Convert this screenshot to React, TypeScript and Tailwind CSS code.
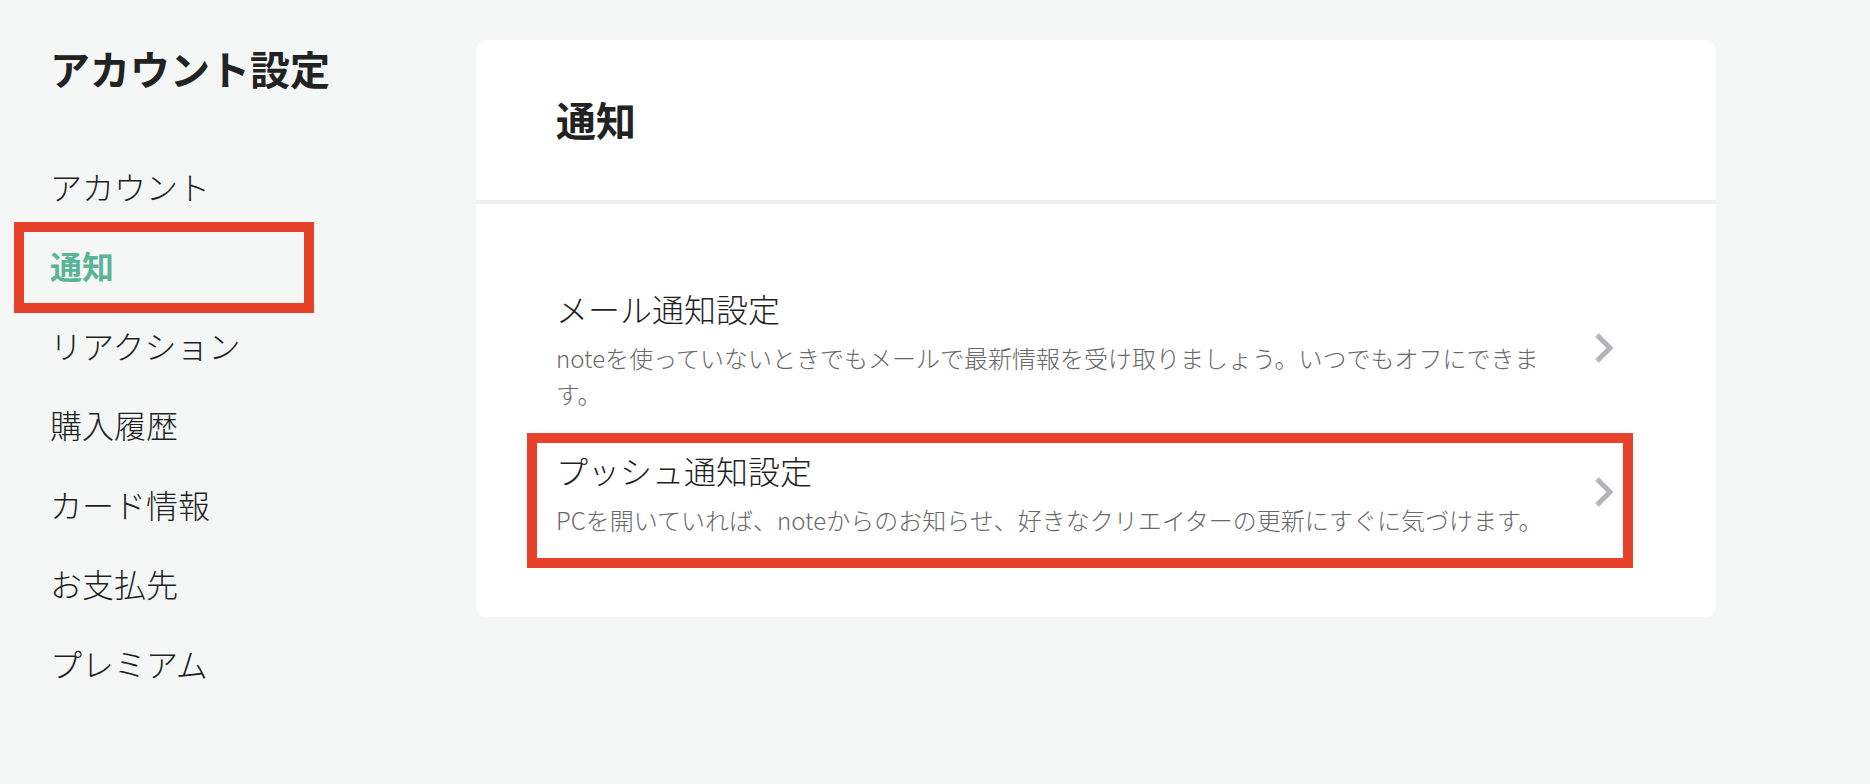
import React from "react";

const menu = ["アカウント", "通知", "リアクション", "購入履歴", "カード情報", "お支払先", "プレミアム"];

function Chevron() {
  return (
    <svg width="20" height="32" viewBox="0 0 20 32" className="shrink-0">
      <polyline points="3,3 16,16 3,29" fill="none" stroke="#b3b4b9" strokeWidth="5" strokeLinecap="butt" strokeLinejoin="miter" />
    </svg>
  );
}

function Item({ title, desc, boxed }: { title: string; desc: string; boxed?: boolean }) {
  return (
    <div className="relative flex items-center justify-between w-[1058px]">
      <div className="w-[995px]">
        <div className="text-[32px] leading-[48px] font-light text-[#1f1f1f]">{title}</div>
        <div className="mt-2 text-[24px] leading-[36px] font-light text-[#686868]">{desc}</div>
      </div>
      <Chevron />
      {boxed && (
        <div className="absolute left-[-29px] top-[-13px] w-[1106px] h-[135px] border-[10px] border-[#e8412a] pointer-events-none" />
      )}
    </div>
  );
}

export default function App() {
  return (
    <div className="min-h-[784px] w-full bg-[#f5f7f7] font-['Noto_Sans_CJK_JP','Noto_Sans',sans-serif] flex">
      <aside className="w-[476px] shrink-0 pt-[40px] pl-[50px]">
        <h1 className="text-[40px] leading-[56px] font-bold text-[#222]">アカウント設定</h1>
        <nav className="mt-[50px] flex flex-col">
          {menu.map((m) => (
            <div key={m} className="relative h-[79.5px] flex items-center">
              <span className={m === "通知" ? "text-[32px] font-bold text-[#5ab596]" : "text-[32px] font-light text-[#1f1f1f]"}>{m}</span>
              {m === "通知" && (
                <div className="absolute left-[-36px] top-[-4px] w-[300px] h-[91px] border-[10px] border-[#e8412a] pointer-events-none" />
              )}
            </div>
          ))}
        </nav>
      </aside>
      <main className="pt-[40px]">
        <div className="w-[1240px] bg-white rounded-[10px] overflow-hidden">
          <div className="h-[160px] flex items-center pl-[80px] pb-[2px]">
            <h2 className="text-[40px] font-bold text-[#222]">通知</h2>
          </div>
          <div className="h-[4px] bg-[#f0f0f0]" />
          <div className="pl-[80px] pt-[80px] pb-[79px] flex flex-col gap-[34px]">
            <Item
              title="メール通知設定"
              desc="noteを使っていないときでもメールで最新情報を受け取りましょう。いつでもオフにできます。"
            />
            <Item
              title="プッシュ通知設定"
              desc="PCを開いていれば、noteからのお知らせ、好きなクリエイターの更新にすぐに気づけます。"
              boxed
            />
          </div>
        </div>
      </main>
    </div>
  );
}
